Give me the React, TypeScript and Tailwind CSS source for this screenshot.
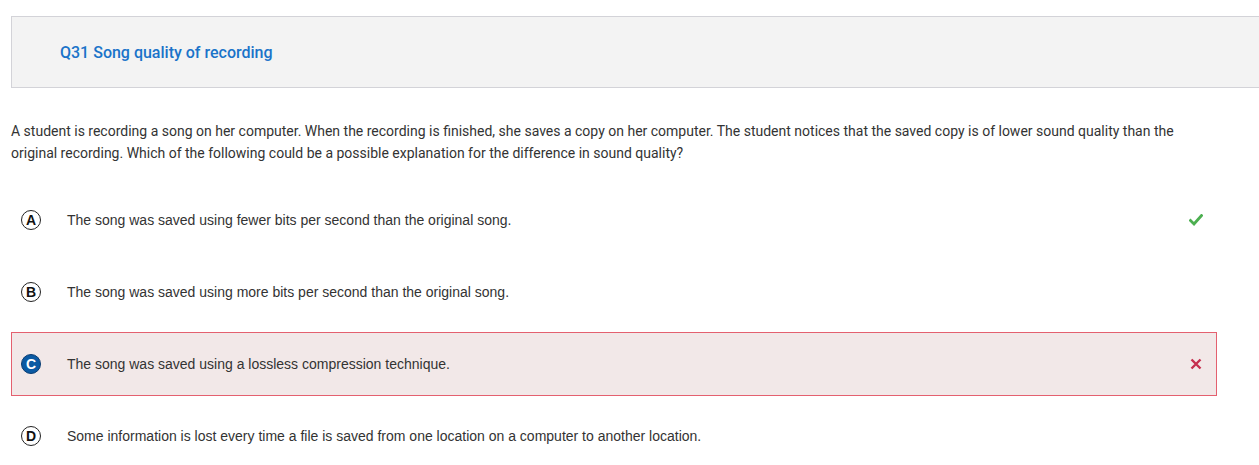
import React from 'react';

type Choice = { letter: string; text: string; state?: 'correct' | 'wrong' };

const choices: Choice[] = [
  { letter: 'A', text: 'The song was saved using fewer bits per second than the original song.', state: 'correct' },
  { letter: 'B', text: 'The song was saved using more bits per second than the original song.' },
  { letter: 'C', text: 'The song was saved using a lossless compression technique.', state: 'wrong' },
  { letter: 'D', text: 'Some information is lost every time a file is saved from one location on a computer to another location.' },
];

function Check() {
  return (
    <svg width="14" height="12" viewBox="0 0 14 12" fill="none">
      <path d="M1.5 6.5 L5 10 L12.5 1.5" stroke="#4caf50" strokeWidth="2.8" strokeLinecap="square" />
    </svg>
  );
}

function Cross() {
  return (
    <svg width="12" height="12" viewBox="0 0 12 12" fill="none">
      <path d="M1.5 1.5 L10.5 10.5 M10.5 1.5 L1.5 10.5" stroke="#c62f4e" strokeWidth="2.4" />
    </svg>
  );
}

function Option({ c }: { c: Choice }) {
  const selected = c.state === 'wrong';
  return (
    <div
      className={
        'flex items-center h-[64px] pl-[9px] pr-[12px] border ' +
        (selected ? 'bg-[#f2e8e8] border-[#e4606f]' : 'border-transparent')
      }
    >
      <div
        className={
          'w-[20px] h-[20px] rounded-full flex items-center justify-center text-[14px] font-bold leading-none ' +
          (selected
            ? 'bg-[#0b5aa3] text-white border-[1.5px] border-[#0a3d73]'
            : 'border-[1.5px] border-[#222] text-[#111]')
        }
        style={{ fontFamily: '"Liberation Sans", Arial, sans-serif' }}
      >
        {c.letter}
      </div>
      <div className="ml-[26px] flex-1 text-[14px] text-[#333]" style={{ fontFamily: '"Liberation Sans", Arial, sans-serif' }}>
        {c.text}
      </div>
      <div className="w-[16px] flex justify-center">
        {c.state === 'correct' && <Check />}
        {c.state === 'wrong' && <Cross />}
      </div>
    </div>
  );
}

export default function App() {
  return (
    <div className="min-h-screen bg-white pt-[16px] pl-[11px]" style={{ fontFamily: 'Roboto, sans-serif' }}>
      <div className="h-[72px] bg-[#f3f3f3] border border-[#d3d3d8] border-r-0 flex items-center pl-[48px] pt-[2px]">
        <h1 className="text-[16px] font-medium text-[#1a73c9]">Q31 Song quality of recording</h1>
      </div>
      <p className="mt-[32px] pr-[60px] text-[14px] leading-[22px] text-[#333]">
        A student is recording a song on her computer. When the recording is finished, she saves a copy on her computer. The student notices that the saved copy is of lower sound quality than the original recording. Which of the following could be a possible explanation for the difference in sound quality?
      </p>
      <div className="mt-[24px] w-[1206px] flex flex-col gap-[8px]">
        {choices.map(c => (
          <Option key={c.letter} c={c} />
        ))}
      </div>
    </div>
  );
}
